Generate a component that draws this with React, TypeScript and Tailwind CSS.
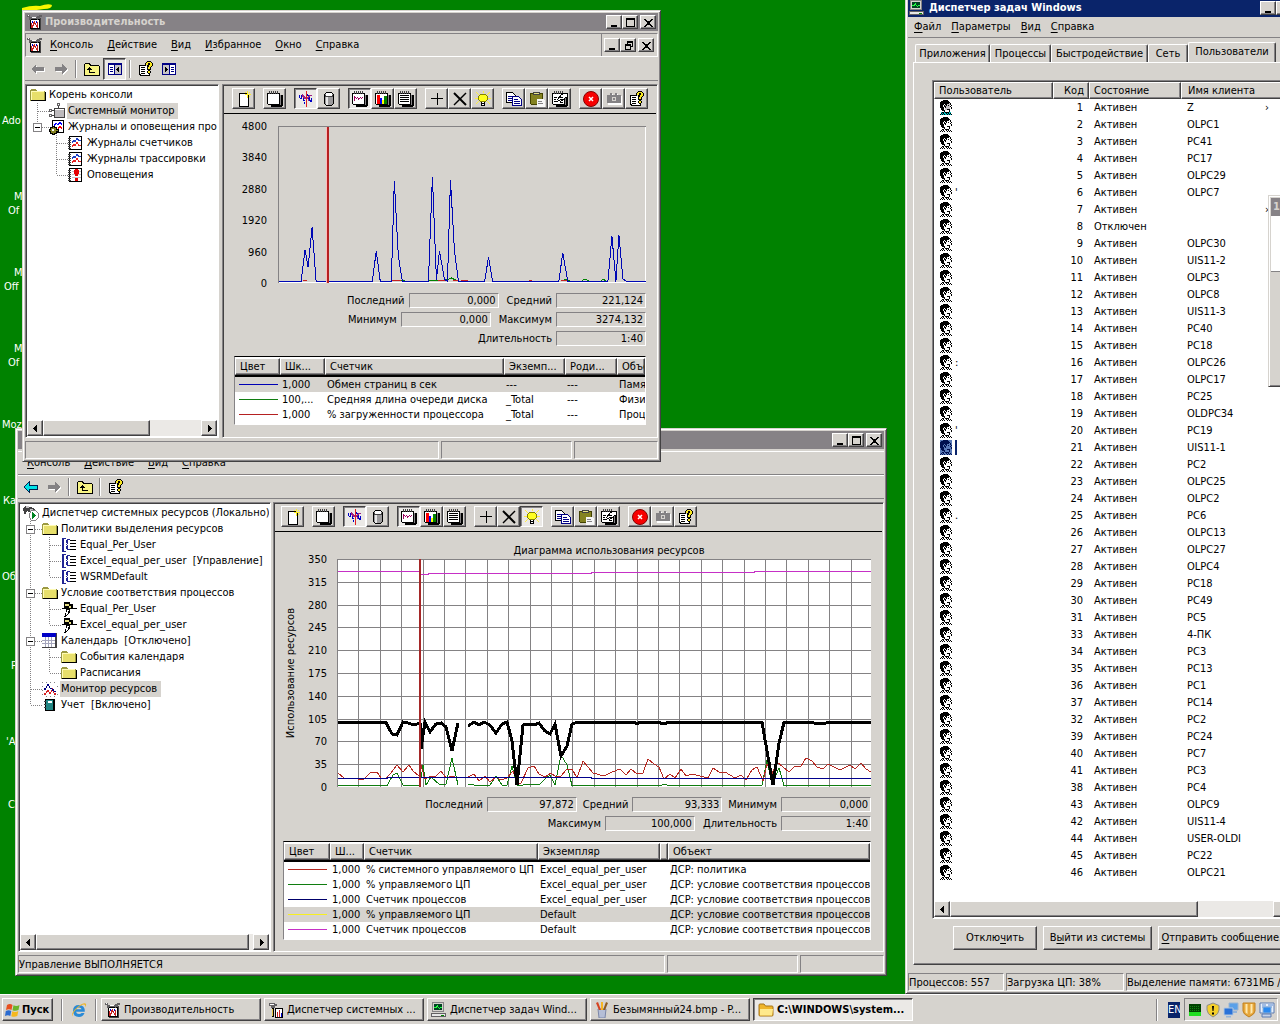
import React, { useId } from "react";

/* ---------- shared surfaces ---------- */

const RAISED =
  "bg-[#d6d3ce] border border-t-white border-l-white border-r-[#424142] border-b-[#424142] shadow-[inset_-1px_-1px_0_#848284]";
const PRESSED =
  "bg-[#ebe9e6] border border-t-[#424142] border-l-[#424142] border-r-white border-b-white shadow-[inset_1px_1px_0_#848284]";
const SUNKEN = "border border-t-[#848284] border-l-[#848284] border-r-white border-b-white";
const PANE =
  "border border-t-[#848284] border-l-[#848284] border-r-white border-b-white shadow-[inset_1px_1px_0_#424142] p-px";

/* ---------- icons ---------- */

type IconProps = { children: React.ReactNode };
const Icon = ({ children }: IconProps) => (
  <svg className="block h-4 w-4 shrink-0" viewBox="0 0 16 16" shapeRendering="crispEdges" aria-hidden="true">
    {children}
  </svg>
);

const pixelPath = (rows: string[], mark = "#") =>
  rows
    .map((row, y) => [...row].map((c, x) => (c === mark ? `M${x} ${y}h1v1h-1z` : "")).join(""))
    .join("");

const FACE = pixelPath([
  "...#####....",
  ".########...",
  "##########..",
  "#########.#.",
  "####.##...#.",
  "###.#.#.#..#",
  "###.##....#.",
  "####.#.....#",
  ".###.......#",
  ".###...###..",
  "..###....#..",
  "....#....#..",
  "..##.####...",
  ".#.#..#.#.#.",
  "#.#.#..#.#.#",
]);

const HELP_ROWS = [
  ".........####...",
  "........#yyyy#..",
  ".......#yy##yy#.",
  ".......#yy##yy#.",
  ".#######.##yyy#.",
  ".#wwwwwww##yy#..",
  ".#w####ww#yy#...",
  ".#wwwwwww#yy#...",
  ".#w####ww####...",
  ".#wwwwwwww##....",
  ".#w####ww#yy#...",
  ".#wwwwwww#yy#...",
  ".#w####www##....",
  ".##wwwwwwww#....",
  "..##########....",
];
const HELP_BLACK = pixelPath(HELP_ROWS, "#");
const HELP_WHITE = pixelPath(HELP_ROWS, "w");
const HELP_YELLOW = pixelPath(HELP_ROWS, "y");

const UserIcon = ({ tone }: { tone: "plain" | "own" | "selected" }) => (
  <svg className="block h-[15px] w-3" viewBox="0 0 12 15" shapeRendering="crispEdges" aria-hidden="true">
    {tone === "selected" && <path d="M0 0h12v15H0z" fill="#5a7ab8" />}
    {tone === "own" && <path d="M5 3h5v7H5z" fill="#c6c3c6" />}
    {tone === "own" && <path d="M1 12h10v3H1z" fill="#00c3c6" />}
    <path d={FACE} fill={tone === "selected" ? "#001050" : "#000"} />
  </svg>
);

const BackIcon = ({ on }: { on?: boolean }) => (
  <Icon>
    {!on && <path d="M2 9l5-5v3h8v4H7v3z" fill="#fff" />}
    <path d="M1 8l5-5v3h8v4H6v3z" fill={on ? "#00e3e7" : "#848284"} stroke={on ? "#002050" : "none"} />
  </Icon>
);
const ForwardIcon = () => (
  <Icon>
    <path d="M15 9l-5-5v3H3v4h7v3z" fill="#fff" />
    <path d="M14 8L9 3v3H2v4h7v3z" fill="#848284" />
  </Icon>
);
const UpIcon = () => (
  <Icon>
    <path d="M.5 14.500v-11l1-1h4l1 2h8l1 1v9z" fill="#f7f384" stroke="#000" />
    <path d="M5 6h1v1h1v1h1v1H6v2h5v1H5V9H3V8h1V7h1z" fill="#000" />
  </Icon>
);
const PanelIcon = ({ flip }: { flip?: boolean }) => (
  <Icon>
    <path d="M1 2h14v12H1z" fill="#000084" />
    <path d="M2 4h12v9H2z" fill="#fff" />
    <path d={flip ? "M2 4h6v9H2z" : "M8 4h6v9H8z"} fill="#c6c3c6" />
    <path d={flip ? "M8 4h1v9H8z" : "M7 4h1v9H7z"} fill="#000084" />
    <path d={flip ? "M10 6h3v1h-3zM10 8h3v1h-3zM10 10h3v1h-3z" : "M3 6h3v1H3zM3 8h3v1H3zM3 10h3v1H3z"} fill="#000084" />
    <path d={flip ? "M4 6l3 2.500L4 11z" : "M12 6L9 8.500l3 2.500z"} fill="#000" />
  </Icon>
);
const HelpIcon = () => (
  <Icon>
    <path d={HELP_WHITE} fill="#fff" />
    <path d={HELP_YELLOW} fill="#f7e721" />
    <path d={HELP_BLACK} fill="#000" />
  </Icon>
);
const NewIcon = () => (
  <Icon>
    <path d="M3.500 2.500h7l2 2v11h-9z" fill="#fff" stroke="#000" />
    <path d="M9 3h6v1H9zM11 0h1v7h-1zM9 1h1v1H9zM13 1h1v1h-1zM13 5h1v1h-1z" fill="#ffef21" />
  </Icon>
);
const Pad = ({ children }: { children?: React.ReactNode }) => (
  <Icon>
    <path d="M3 4h13v10l-2 2H4z" fill="#000" />
    <path d="M4 4h10v10H4z" fill="#848284" />
    <path d="M.5 2.500h12v11h-11l-1-1z" fill="#fff" stroke="#000" />
    <path d="M2 0h1v3H2zM4 0h1v3H4zM6 0h1v3H6zM8 0h1v3H8zM10 0h1v3h-1z" fill="#424142" />
    {children}
  </Icon>
);
const ActivityIcon = () => (
  <Icon>
    <path d="M1 4h1v3h1V4h1v5h1V6h1v3h1v1H5V9H4V8H2V7H1zM10 4h1v2h1v3h1V7h1v4h-2v-1h-1V8h-1zM9 3h1v2H9zM6 11h1v2H6z" fill="#0000c6" />
    <path d="M4 3h1v1h1v1h1v1h3V5h1V4h3v1h-2v1h-1v1h-1v1h1v2h-1V8H6V7H5V6H4z" fill="#a02080" />
    <path d="M8 0h1v16H8z" fill="#e02020" />
  </Icon>
);
const DiskIcon = () => (
  <Icon>
    <path d="M3.500 3.500l2-2h5l2 2v9l-2 2h-5l-2-2z" fill="#9c9a9c" stroke="#000" />
    <path d="M5 6h2v8H5z" fill="#e7e7e7" />
    <path d="M5 2h6v3H5z" fill="#fff" />
    <path d="M4 4h1v1h6V4h1v2H4z" fill="#424142" />
  </Icon>
);
const GraphIcon = () => (
  <Pad>
    <path d="M2 5h1v5H2zM3 6h1v1H3zM4 7h1v1H4zM5 6h1v1H5zM6 7h1v2H6zM7 7h1v1H7zM8 6h1v1H8zM9 7h1v1H9zM10 6h1v1h-1z" fill="#a00060" />
  </Pad>
);
const BarsIcon = () => (
  <Pad>
    <path d="M2 4h3v9H2z" fill="#ff0000" />
    <path d="M5 7h2v6H5z" fill="#0000ff" />
    <path d="M7 9h2v4H7z" fill="#ffff00" />
    <path d="M9 5h3v8H9z" fill="#008200" />
  </Pad>
);
const ReportIcon = () => (
  <Pad>
    <path d="M2 4h9v1H2zM2 6h9v1H2zM2 8h9v1H2zM2 10h9v1H2z" fill="#000" />
  </Pad>
);
const PlusIcon = () => (
  <Icon>
    <path d="M8 2h1v5h5v1H9v6H8V8H2V7h6z" fill="#000" />
  </Icon>
);
const DeleteIcon = () => (
  <svg className="block h-4 w-4 shrink-0" viewBox="0 0 16 16" aria-hidden="true">
    <path d="M2 2l12 12" stroke="#000" strokeWidth="2" />
    <path d="M14 2L2 14" stroke="#000" strokeWidth="1.500" />
  </svg>
);
const BulbIcon = () => (
  <Icon>
    <path d="M1 1l3 3M15 1l-3 3M0 7h3M13 7h3M8 0v2M1 13l3-3M15 13l-3-3" stroke="#ffef42" />
    <path d="M5.500 3.500h5l2 2v3l-2 2h-5l-2-2v-3z" fill="#ffff21" stroke="#848200" />
    <path d="M6 11h4v4H6z" fill="#000" />
    <path d="M7 11h2v1H7zM7 13h2v1H7z" fill="#fff" />
  </Icon>
);
const CopyIcon = () => (
  <Icon>
    <path d="M.5 1.500h6l3 3v7h-9z" fill="#fff" stroke="#000" />
    <path d="M2 5h4v1H2zM2 7h4v1H2zM2 9h4v1H2z" fill="#000084" />
    <path d="M6.500 5.500h6l3 3v6h-9z" fill="#fff" stroke="#000084" />
    <path d="M8 8h4v1H8zM8 10h6v1H8zM8 12h6v1H8z" fill="#000084" />
  </Icon>
);
const PasteIcon = () => (
  <Icon>
    <path d="M1 2h13v12H2l-1-1z" fill="#424100" />
    <path d="M2 3h11v10H2z" fill="#848221" />
    <path d="M4 1h7v3H4z" fill="#424142" />
    <path d="M5 2h5v1H5z" fill="#e7e384" />
    <path d="M8 8h6l2 2v6H8z" fill="#f7f7f7" />
    <path d="M9 10h4v1H9zM9 12h5v1H9z" fill="#848284" />
  </Icon>
);
const PropsIcon = () => (
  <Pad>
    <path d="M2 6h3v1H2zM2 8h2v1H2zM2 10h4v1H2zM8 11h3v1H8z" fill="#000" />
    <path d="M5.500 8.500l4-5 2-1h4v3l-3 2-4 3z" fill="#fff" stroke="#000" />
    <path d="M8 6h3v1H8zM8 8h4v1H8z" fill="#000" />
  </Pad>
);
const StopIcon = () => (
  <svg className="block h-4 w-4 shrink-0" viewBox="0 0 16 16" aria-hidden="true">
    <circle cx="8" cy="8" r="7.500" fill="#f70000" stroke="#840000" />
    <path d="M6 6l4 4M10 6l-4 4" stroke="#fff" strokeWidth="1.500" />
  </svg>
);
const CameraIcon = () => (
  <Icon>
    <path d="M2 5h3V3h2v2h3V3h2v2h4v9H2z" fill="#fff" />
    <path d="M1 4h3V2h2v2h3V2h2v2h4v8H1z" fill="#848284" />
    <path d="M6 6h4v4H6z" fill="#d6d3ce" />
    <path d="M7 7h2v2H7z" fill="#848284" />
  </Icon>
);
const FolderIcon = () => (
  <Icon>
    <path d="M0 3l1-1h5l1 2h7l1 1v9H0z" fill="#9c9a42" />
    <path d="M1 4h13v9H1z" fill="#e7df6b" />
    <path d="M1 4h13v1H1zM1 4h1v9H1z" fill="#fffbb5" />
    <path d="M1 13h14V5h1v9H1z" fill="#000" />
  </Icon>
);
const MonitorNodeIcon = () => (
  <Icon>
    <path d="M5.500 5.500h10v9h-10z" fill="#bdbabd" stroke="#424142" />
    <path d="M6 6h9v1H6z" fill="#fff" />
    <path d="M9 3h1v2H9zM3 7h2v1H3zM3 12h2v1H3z" fill="#424142" />
    <path d="M8 0h3v3H8zM0 6h3v3H0zM0 11h3v3H0z" fill="#636163" />
    <path d="M9 1h1v1H9zM1 7h1v1H1zM1 12h1v1H1z" fill="#fff" />
  </Icon>
);
const LogsIcon = () => (
  <Icon>
    <path d="M3.500 1.500h11v12h-11z" fill="#fff" stroke="#000" />
    <path d="M5 7l2-3 2 2 2-3 2 3" fill="none" stroke="#0000ff" />
    <path d="M9 10l2-3 2 3" fill="none" stroke="#ff0000" />
    <path d="M1 8h2V7h2v1h2v2h2v2H7v2H5v1H3v-1H1v-2H0v-2h1z" fill="#848221" stroke="#000" />
    <path d="M3 10h2v2H3z" fill="#fff" />
  </Icon>
);
const LogPageIcon = ({ alert }: { alert?: boolean }) => (
  <Icon>
    <path d="M1.500 1.500h12v13h-12z" fill="#fff" stroke="#000" />
    <path d="M0 3h3v1H0zM0 5h3v1H0zM0 7h3v1H0zM0 9h3v1H0zM0 11h3v1H0zM0 13h3v1H0z" fill="#424142" />
    {alert ? (
      <>
        <path d="M4 4h9v1H4zM4 7h9v1H4zM4 10h9v1H4z" fill="#c6c3c6" />
        <path d="M7 2h3v1h1v4h-1v2H7V7H6V3h1zM7 11h3v3H7z" fill="#e70000" />
      </>
    ) : (
      <>
        <path d="M4 8l2-3 1 2 2-4 2 3 2-1" fill="none" stroke="#2142c6" />
        <path d="M4 12l2-3 1 2 2-4 2 4 2-1" fill="none" stroke="#e72121" />
      </>
    )}
  </Icon>
);
const AppIcon = () => (
  <Icon>
    <path d="M3.500 5.500h9v9h-9z" fill="#fff" stroke="#000" />
    <path d="M4 14V9h1v2h1V8h1V7h1v2h1v2h1V8h1v6h-1v-1H9v-2H8v-1H7v2H6v2z" fill="#c62121" />
    <path d="M5 7h1v2H5zM9 7h1v2H9z" fill="#0000c6" />
    <path d="M0 1h3v2H0zM2 3h8V2h2V1h3v2h-2v2h-2v1h-1V5H4v1H2z" fill="#636163" />
    <path d="M1 1h1v1H1zM5 3h4v1H5z" fill="#fff" />
    <path d="M13 4h1v12H4v-1h9z" fill="#424142" />
  </Icon>
);
const ResourceRootIcon = () => (
  <Icon>
    <path d="M0 3l3-2 5 1 4 2v3l-4 1-4-2-1 3H1z" fill="#424142" />
    <path d="M3 1h3v2H3zM7 4h3v2H7z" fill="#c6c3c6" />
    <path d="M8.500 5.500h4l3 3v4l-3 3h-4l-2-3v-4z" fill="#fff" stroke="#848284" />
    <path d="M9 7h1v1h1v1h1v1h1v1h-1v1h-1v1h-1v1H9z" fill="#008221" />
  </Icon>
);
const PolicyIcon = () => (
  <Icon>
    <path d="M5 1H1v14h4v-1H3V2h2zM6 2h3v1H7v4H6V6H5V3h1zM5 7h1v1H5zM6 8h1v4h2v1H6v-1H5V9h1z" fill="#212494" />
    <path d="M9 3h6v1H9zM9 6h6v1H9zM9 9h6v1H9zM9 12h6v1H9z" fill="#000" />
  </Icon>
);
const MatchIcon = () => (
  <Icon>
    <path d="M3 1h6v2h3v4h4v1H9v3L5 16H3l2-5V8H1V7h2z" fill="#000" />
    <path d="M4 3h4v2H4zM8 5h2v2H8z" fill="#e7df84" />
    <path d="M6 9h2l-2 5H5z" fill="#fff" />
    <path d="M11 3h1v5h-1z" fill="#000" />
  </Icon>
);
const CalendarIcon = () => (
  <Icon>
    <path d="M0 0h15v15H0z" fill="#424142" />
    <path d="M0 0h14v4H0z" fill="#0000c6" />
    <path d="M0 4h13v10H0z" fill="#fff" />
    <path d="M3 4h1v10H3zM6 4h1v10H6zM9 4h1v10H9zM0 7h13v1H0zM0 10h13v1H0z" fill="#a5a6bd" />
  </Icon>
);
const ResMonIcon = () => (
  <Icon>
    <path d="M0 1h15v14H0z" fill="#fff" />
    <path d="M0 1h1v1H0zM4 1h1v1H4zM8 1h1v1H8zM12 1h1v1h-1zM0 5h1v1H0zM0 9h1v1H0zM0 13h1v1H0zM15 5h1v1h-1zM15 13h1v1h-1zM4 15h1v1H4zM8 15h1v1H8zM12 15h1v1h-1z" fill="#848284" />
    <path d="M2 7h2v2H2zM4 5h1v2H4zM5 3h2v2H5zM7 5h1v2H7zM8 7h2v1H8zM10 8h2v2h-2zM12 10h2v1h-2z" fill="#000084" />
    <path d="M2 12h2v2H2zM4 10h1v2H4zM5 9h2v2H5zM7 11h2v2H7zM9 9h1v2H9zM10 7h1v1h-1zM11 10h1v2h-1zM12 12h2v2h-2z" fill="#d62121" />
  </Icon>
);
const BookIcon = () => (
  <Icon>
    <path d="M3 2h10v12H3z" fill="#000" />
    <path d="M4 3h7v10H4z" fill="#218684" />
    <path d="M6 4h4v2H6z" fill="#fff" />
    <path d="M2 4h2v1H2zM2 7h2v1H2zM2 10h2v1H2z" fill="#424142" />
  </Icon>
);
const TaskMgrIcon = () => (
  <Icon>
    <path d="M1.500.5h11v9h-11z" fill="#d6d3ce" stroke="#848284" />
    <path d="M3 2h8v6H3z" fill="#004221" />
    <path d="M3 5h2V4h1V3h1v2h1v1h1V5h2v1H9v1H8V6H7V5H6v1H3z" fill="#21ff42" />
    <path d="M.5 11.500h14v3H.5z" fill="#e7e7e7" stroke="#636163" />
    <path d="M10 13h3v1h-3z" fill="#008200" />
  </Icon>
);
const WsrmIcon = () => (
  <Icon>
    <path d="M1 1h6v1h2v2H7v2H3V4H1z" fill="#636163" />
    <path d="M2 2h4v1H2z" fill="#fff" />
    <path d="M4 6h2v9H4z" fill="#000" />
    <path d="M4 7h1v7H4z" fill="#e7c642" />
    <path d="M7.500 6.500h7v9h-7z" fill="#fff" stroke="#000" />
    <path d="M9 10h1v5H9zM11 8h1v7h-1z" fill="#c62121" />
    <path d="M13 11h1v4h-1z" fill="#0000c6" />
  </Icon>
);
const PaintIcon = () => (
  <svg className="block h-4 w-4 shrink-0" viewBox="0 0 16 16" aria-hidden="true">
    <path d="M4 7h8l-1 9H5z" fill="#b5bed6" stroke="#7b86a8" />
    <path d="M2 1l2-1 3 8H5z" fill="#d64221" />
    <path d="M7 0h2v8H7z" fill="#f7b521" />
    <path d="M12 0l2 1-3 7H9z" fill="#8c5a21" />
  </svg>
);
const XpFolderIcon = () => (
  <svg className="block h-4 w-4 shrink-0" viewBox="0 0 16 16" aria-hidden="true">
    <path d="M1 3q0-1 1-1h4l1.500 2H14q1 0 1 1v8q0 1-1 1H2q-1 0-1-1z" fill="#efb52a" stroke="#a5751a" />
    <path d="M2 7h13l-1 6.500H2z" fill="#ffe98c" />
  </svg>
);
const StartFlag = () => (
  <svg className="block h-4 w-4 shrink-0" viewBox="0 0 16 16" aria-hidden="true">
    <path d="M2 3q3-2 5.500 0L6.500 8Q4 6.500 1 8z" fill="#e8501e" />
    <path d="M8.500 3.200q3 1.500 6-.2l-1 5q-3 1.500-6 .2z" fill="#6bb52a" />
    <path d="M.8 9q3-1.600 5.500 0l-1 5Q3 12.500 0 14z" fill="#2a6bd0" />
    <path d="M7.300 9.200q3 1.500 6-.2l-1 5q-3 1.500-6 .2z" fill="#f5b81e" />
  </svg>
);
const IeIcon = () => (
  <svg className="block h-4 w-4 shrink-0" viewBox="0 0 16 16" aria-hidden="true">
    <path d="M13.800 9.700H5Q5.500 12 8 12q1.800 0 2.500-1H13.500Q12 15 8 15q-6 0-6-6.200Q2 3 8 3q6 0 5.800 6.700zM5 7.300h5.600Q10.200 5.500 8 5.500T5 7.300z" fill="#2a8ad6" />
    <path d="M1.500 14.500Q-.5 11 6 5.500 12 .5 14.500 1.500q1.500 1-.5 4 .8-2.800-1-3Q10.500 2.500 6 6.500q-5 5-4.500 8z" fill="#efb52a" />
  </svg>
);
const CpuTray = () => (
  <Icon>
    <path d="M2 2h12v12H2z" fill="#004200" />
    <path d="M2 10h12v4H2z" fill="#21df21" />
    <path d="M3 4h10M3 6h10M3 8h10" stroke="#108210" strokeDasharray="1 1" />
  </Icon>
);
const ShieldTray = ({ warn }: { warn?: boolean }) => (
  <svg className="block h-4 w-4 shrink-0" viewBox="0 0 16 16" aria-hidden="true">
    {warn ? (
      <>
        <path d="M8 1l6 2.500V8q0 4-6 7-6-3-6-7V3.500z" fill="#f5cf2a" stroke="#8c8c8c" />
        <path d="M7 4h2l-.5 5h-1zM7 10.500h2v2H7z" fill="#000" />
      </>
    ) : (
      <>
        <path d="M2 1h12v8q0 3-6 6-6-3-6-6z" fill="#e8a83a" stroke="#c08020" />
        <path d="M4.500 2h2v10l-2-1.500zM9.500 2h2v8.500l-2 1.500z" fill="#ffe9b0" />
      </>
    )}
  </svg>
);
const NetTray = () => (
  <svg className="block h-4 w-4 shrink-0" viewBox="0 0 16 16" aria-hidden="true">
    <path d="M6 1h9v7H6z" fill="#5aa0e8" stroke="#9cb4d0" />
    <path d="M1 6h9v7H1z" fill="#2a72d8" stroke="#b4c8e0" />
    <path d="M3 14h5v1.500H3zM10 9h4v2h-4z" fill="#94b4d8" />
  </svg>
);
const ServerTray = () => (
  <svg className="block h-4 w-4 shrink-0" viewBox="0 0 16 16" aria-hidden="true">
    <path d="M1 1h14v10H1z" fill="#e7effa" stroke="#5a7ab0" />
    <path d="M3 3h4M9 3h5M3 5h10" stroke="#5a8ad0" />
    <path d="M4 5h8v6H4z" fill="#2a8af0" stroke="#8cb0d8" />
    <path d="M3 12h9v3H3z" fill="#c6d3e8" stroke="#5a7ab0" />
  </svg>
);

/* ---------- window chrome ---------- */

type Glyph = "min" | "max" | "restore" | "close" | "left" | "right";
const GLYPHS: Record<Glyph, string> = {
  min: "M2 8h6v2H2z",
  max: "M1 1h9v9H1zM2 3v6h7V3z",
  restore: "M4 1h6v6H8v3H2V4h2zM5 3v1h3v2h1V3zM3 6v3h4V6z",
  close: "M1 2h2v1h1v1h3V3h1V2h2v1H9v1H8v1H7v2h1v1h1v1h1v1H8V9H7V8H4v1H3v1H1V9h1V8h1V7h1V5H3V4H2V3H1z",
  left: "M7 2v7H6V8H5V7H4V6H3V5h1V4h1V3h1V2z",
  right: "M4 2v7h1V8h1V7h1V6h1V5H7V4H6V3H5V2z",
};
const GlyphSvg = ({ name }: { name: Glyph }) => (
  <svg className="block h-[11px] w-[11px]" viewBox="0 0 11 11" shapeRendering="crispEdges" aria-hidden="true">
    <path d={GLYPHS[name]} fill="#000" fillRule="evenodd" />
  </svg>
);
const CaptionButton = ({ name, label }: { name: Glyph; label: string }) => (
  <button aria-label={label} className={`flex h-[14px] w-4 shrink-0 items-center justify-center ${RAISED}`}>
    <GlyphSvg name={name} />
  </button>
);
const CaptionButtons = ({ restore }: { restore?: boolean }) => (
  <div className="flex shrink-0">
    <CaptionButton name="min" label="Свернуть" />
    <CaptionButton name={restore ? "restore" : "max"} label={restore ? "Восстановить" : "Развернуть"} />
    <div className="ml-0.5">
      <CaptionButton name="close" label="Закрыть" />
    </div>
  </div>
);

const Window = ({ place, children }: { place: string; children: React.ReactNode }) => (
  <section
    className={`absolute flex flex-col border border-t-[#d6d3ce] border-l-[#d6d3ce] border-r-[#424142] border-b-[#424142] bg-[#d6d3ce] p-0.5 shadow-[inset_1px_1px_0_#fff,inset_-1px_-1px_0_#848284] ${place}`}
  >
    {children}
  </section>
);

const MenuItem = ({ text }: { text: string }) => (
  <button className="px-[7px] leading-4">
    <span className="underline underline-offset-2">{text[0]}</span>
    {text.slice(1)}
  </button>
);

const ToolButton = ({ label, on, children }: { label: string; on?: boolean; children: React.ReactNode }) => (
  <button aria-label={label} className={`flex h-[22px] w-[23px] items-center justify-center ${on ? PRESSED : ""}`}>
    {children}
  </button>
);
const ToolSeparator = () => <div className="mx-[3px] h-[18px] w-0.5 border-l border-l-[#848284] border-r border-r-white" />;

const ScrollBar = ({ thumb }: { thumb: string }) => (
  <div className="flex h-4 shrink-0 bg-[#ebe9e6]">
    <button aria-label="Влево" className={`flex w-4 shrink-0 items-center justify-center ${RAISED}`}>
      <GlyphSvg name="left" />
    </button>
    <div className={`${RAISED} ${thumb}`} />
    <button aria-label="Вправо" className={`ml-auto flex w-4 shrink-0 items-center justify-center ${RAISED}`}>
      <GlyphSvg name="right" />
    </button>
  </div>
);

/* ---------- tree ---------- */

type Guide = "none" | "line" | "tee" | "end" | "open" | "openEnd";
type Node = { guides: Guide[]; icon: React.ReactNode; text: string; selected?: boolean };

const GuideCell = ({ kind }: { kind: Guide }) => {
  const ends = kind === "end" || kind === "openEnd";
  return (
    <svg className="block h-4 w-[19px] shrink-0" viewBox="0 0 19 16" shapeRendering="crispEdges" aria-hidden="true">
      {kind !== "none" && <path d={ends ? "M7.500 0v8" : "M7.500 0v16"} stroke="#848284" strokeDasharray="1 1" />}
      {kind !== "none" && kind !== "line" && <path d="M8 8.500h11" stroke="#848284" strokeDasharray="1 1" />}
      {(kind === "open" || kind === "openEnd") && (
        <>
          <path d="M3.500 4.500h8v8h-8z" fill="#fff" stroke="#848284" />
          <path d="M5 8h5v1H5z" fill="#000" />
        </>
      )}
    </svg>
  );
};

const Tree = ({ nodes }: { nodes: Node[] }) => (
  <ul className="min-h-0 flex-1 overflow-hidden pt-px pl-[3px]">
    {nodes.map((n, i) => (
      <li key={i} className="flex h-4 items-center whitespace-nowrap">
        {n.guides.map((g, j) => (
          <GuideCell key={j} kind={g} />
        ))}
        {n.icon}
        <span className={`ml-0.5 px-px leading-4 whitespace-pre ${n.selected ? "bg-[#d6d3ce] pr-1" : ""}`}>{n.text}</span>
      </li>
    ))}
  </ul>
);

const PERF_TREE: Node[] = [
  { guides: [], icon: <FolderIcon />, text: "Корень консоли" },
  { guides: ["tee"], icon: <MonitorNodeIcon />, text: "Системный монитор", selected: true },
  { guides: ["openEnd"], icon: <LogsIcon />, text: "Журналы и оповещения прои" },
  { guides: ["none", "tee"], icon: <LogPageIcon />, text: "Журналы счетчиков" },
  { guides: ["none", "tee"], icon: <LogPageIcon />, text: "Журналы трассировки" },
  { guides: ["none", "end"], icon: <LogPageIcon alert />, text: "Оповещения" },
];

const WSRM_TREE: Node[] = [
  { guides: [], icon: <ResourceRootIcon />, text: "Диспетчер системных ресурсов (Локально)" },
  { guides: ["open"], icon: <FolderIcon />, text: "Политики выделения ресурсов" },
  { guides: ["line", "tee"], icon: <PolicyIcon />, text: "Equal_Per_User" },
  { guides: ["line", "tee"], icon: <PolicyIcon />, text: "Excel_equal_per_user  [Управление]" },
  { guides: ["line", "end"], icon: <PolicyIcon />, text: "WSRMDefault" },
  { guides: ["open"], icon: <FolderIcon />, text: "Условие соответствия процессов" },
  { guides: ["line", "tee"], icon: <MatchIcon />, text: "Equal_Per_User" },
  { guides: ["line", "end"], icon: <MatchIcon />, text: "Excel_equal_per_user" },
  { guides: ["open"], icon: <CalendarIcon />, text: "Календарь  [Отключено]" },
  { guides: ["line", "tee"], icon: <FolderIcon />, text: "События календаря" },
  { guides: ["line", "end"], icon: <FolderIcon />, text: "Расписания" },
  { guides: ["tee"], icon: <ResMonIcon />, text: "Монитор ресурсов", selected: true },
  { guides: ["end"], icon: <BookIcon />, text: "Учет  [Включено]" },
];

/* ---------- monitor pane ---------- */

const ChartButton = ({ label, on, children }: { label: string; on?: boolean; children: React.ReactNode }) => (
  <button aria-label={label} className={`flex h-[21px] w-[23px] items-center justify-center ${on ? PRESSED : RAISED}`}>
    {children}
  </button>
);

const ChartToolbar = ({ highlight }: { highlight?: boolean }) => (
  <div className={`flex h-7 shrink-0 gap-2 border-b border-b-black pt-0.5 ${highlight ? "pl-1.5" : "pl-2"}`}>
    <ChartButton label="Новый набор"><NewIcon /></ChartButton>
    <ChartButton label="Очистить"><Pad /></ChartButton>
    <div className="flex">
      <ChartButton label="Текущая активность" on><ActivityIcon /></ChartButton>
      <ChartButton label="Данные журнала"><DiskIcon /></ChartButton>
    </div>
    <div className="flex">
      <ChartButton label="График" on><GraphIcon /></ChartButton>
      <ChartButton label="Гистограмма"><BarsIcon /></ChartButton>
      <ChartButton label="Отчет"><ReportIcon /></ChartButton>
    </div>
    <div className="flex">
      <ChartButton label="Добавить"><PlusIcon /></ChartButton>
      <ChartButton label="Удалить"><DeleteIcon /></ChartButton>
      <ChartButton label="Выделить" on={highlight}><BulbIcon /></ChartButton>
    </div>
    <div className="flex">
      <ChartButton label="Копировать"><CopyIcon /></ChartButton>
      <ChartButton label="Вставить"><PasteIcon /></ChartButton>
      <ChartButton label="Свойства"><PropsIcon /></ChartButton>
    </div>
    <div className="flex">
      <ChartButton label="Остановить"><StopIcon /></ChartButton>
      <ChartButton label="Обновить"><CameraIcon /></ChartButton>
      <ChartButton label="Справка"><HelpIcon /></ChartButton>
    </div>
  </div>
);

const Readout = ({ label, value }: { label: string; value: string }) => {
  const id = useId();
  return (
    <div className="flex items-center gap-1">
      <label htmlFor={id}>{label}</label>
      <output id={id} className={`h-[15px] w-[90px] pr-0.5 text-right leading-[14px] ${SUNKEN}`}>
        {value}
      </output>
    </div>
  );
};

type Counter = { color: string; cells: string[]; selected?: boolean };
type Column = { title: string; width: string };

const CounterTable = ({ columns, rows }: { columns: Column[]; rows: Counter[] }) => (
  <div className="flex-none overflow-hidden border border-t-black border-l-[#848284] border-r-white border-b-white bg-white pb-0.5">
    <table className="w-full table-fixed border-collapse">
      <thead>
        <tr className="h-[19px] border-b-2 border-b-black">
          {columns.map((c, i) => (
            <th key={i} className={`${c.width} p-0 font-normal`}>
              <div className={`h-[17px] overflow-hidden pl-1 text-left leading-4 whitespace-nowrap ${RAISED}`}>{c.title}</div>
            </th>
          ))}
        </tr>
      </thead>
      <tbody>
        {rows.map((r, i) => (
          <tr key={i} className={`h-[15px] ${r.selected ? "bg-[#d6d3ce]" : ""}`}>
            <td className="p-0 pl-1">
              <div className="h-px w-[39px]" style={{ backgroundColor: r.color }} />
            </td>
            {r.cells.map((t, j) => (
              <td key={j} className="overflow-hidden p-0 pl-0.5 leading-[15px] whitespace-nowrap">
                {t}
              </td>
            ))}
          </tr>
        ))}
      </tbody>
    </table>
  </div>
);

const AxisLabels = ({ values, width }: { values: number[]; width: string }) => (
  <div className={`-mt-[5px] -mb-[7px] flex flex-col justify-between text-right leading-3 ${width}`}>
    {values.map((v) => (
      <span key={v}>{v}</span>
    ))}
  </div>
);

const PerfChart = () => (
  <svg className="block h-[157px] min-w-0 flex-1" viewBox="0 0 367 157" preserveAspectRatio="none" role="img" aria-label="График счетчиков">
    <g shapeRendering="crispEdges" fill="none">
      <path d="M366.500 0v156.500H0" stroke="#fff" />
      <path d="M.5 157V.5H367" stroke="#848284" />
      <path d="M116 155l3-1h6l2 1M150 155l4-1h14l5-2 6 3M284 155l3-2 4 2M303 155l3-2 4 2M322 155l2-2 3 2" stroke="#008200" />
      <path d="M25 154.500h4M114 154.500h9M160 154.500h10M175 154.500h5M183 154.500h6M282 154.500h6M250 154.500h3" stroke="#c62121" />
      <path
        d="M1 155.500H23L27 124L30 141L34 101L38 155.500H94L98 125L102 155.500H113L116 55L120 130L124 155.500H150L154 51L158 154L161 125L166 153L169 155.500L172 54L176 125L180 155.500H206L210 131L214 155.500H280L284 127L289 155.500H329L333 110L337 155.500L340 109L344 153L348 155.500H367"
        stroke="#0008b5"
      />
      <path d="M48.500 1v156" stroke="#ffbaba" />
      <path d="M50 1v156" stroke="#b52021" strokeWidth="2" />
    </g>
  </svg>
);

const UsageChart = () => (
  <svg className="block h-[228px] min-w-0 flex-1 bg-white" viewBox="0 0 534 228" preserveAspectRatio="none" role="img" aria-label="Диаграмма использования ресурсов">
    <g shapeRendering="crispEdges" fill="none">
      <g stroke="#848284">
        {Array.from({ length: 25 }, (_, i) => Math.round(i * 21.4) + 0.5).map((x) => (
          <path key={x} d={`M${x} 0V228`} />
        ))}
        {Array.from({ length: 10 }, (_, i) => Math.round(i * 22.8) + 0.5).map((y) => (
          <path key={y} d={`M0 ${y}H534`} />
        ))}
      </g>
      <path d="M1 12.500H83V15.500H91V14.500H254V13.500H417V12.500H534" stroke="#c630c6" />
      <path
        d="M1 226.500H50L56 216L60 214L66 226H83L86 206L89 226L94 218L103 226L109 225L115 199L121 226M131 225L137 226H153L159 217L165 226H170L175 207L180 226H186L191 225H197L202 226L208 220L213 216L218 226L224 196L230 206L235 226.500H324L327 225L331 226.500H425L430 201L435 226L442 209L447 226.500H534"
        stroke="#107d10"
      />
      <path
        d="M1 214L7 219H20L22 221L27 220L34 213H40L44 219H49L54 214L60 206L66 213L72 206L76 212L82 217L84 206L88 220L94 217H99L104 212L109 219L115 217L121 219M131 218L137 215L142 222L148 217L153 223L159 218L164 221L170 219L176 212L181 225L184 224L191 209L197 207L202 215L208 218L214 214L219 218L224 217L229 211L235 210L240 219L246 202L256 214L267 217L275 213L283 210L289 216L294 210L300 215L306 214L311 200L317 205L322 208L327 220L333 215L338 219L344 210L349 217L355 215L371 219L376 209L382 213H388L398 219L404 216L409 221L415 211L420 208L426 222L430 205L435 215L440 203L452 213L458 207H464L469 199L475 202L480 208L486 210L491 205L497 208L503 211L513 206L518 210L524 204L529 210L534 213"
        stroke="#b52821"
      />
      <path d="M1 219.500H50V218.500H254V219.500H534" stroke="#00008c" />
      <path
        d="M1 163.500H49L55 175L60 176L66 163L71 164L77 166L83 164L84 190L88 163L93 173L99 165L104 164L109 168L115 192L121 164M131 167L137 163L142 166L147 163L153 166L159 174L165 165L170 163L175 182L180 226L186 166L191 165L197 166L202 164L208 172L213 175L218 165L224 197L230 187L235 165L240 163.500H297L300 164.500L303 163.500H322L327 165L331 163.500H425L436 226L442 184L447 163.500H476L478 164.500H488L490 163.500H534"
        stroke="#000"
        strokeWidth="3"
      />
      <path d="M83 0v228" stroke="#a52828" strokeWidth="2" />
    </g>
  </svg>
);

/* ---------- windows ---------- */

const PerformanceWindow = () => (
  <Window place="left-[22px] top-2.5 h-[452px] w-[639px]">
    <header className="flex h-[18px] shrink-0 items-center gap-0.5 bg-[#868286] pr-0.5 pl-0.5">
      <AppIcon />
      <h2 className="flex-1 font-bold text-[#d6d3ce]">Производительность</h2>
      <CaptionButtons />
    </header>
    <div className={`mt-0.5 flex h-6 shrink-0 items-stretch ${SUNKEN}`}>
      <nav className="flex flex-1 items-center pl-px">
        <AppIcon />
        {["Консоль", "Действие", "Вид", "Избранное", "Окно", "Справка"].map((t) => (
          <MenuItem key={t} text={t} />
        ))}
      </nav>
      <div className="flex items-center border-l border-l-[#848284] pr-[3px] pl-0.5">
        <CaptionButtons restore />
      </div>
    </div>
    <div className="flex h-6 shrink-0 items-center border-b border-b-[#848284] pl-px">
      <ToolButton label="Назад"><BackIcon /></ToolButton>
      <ToolButton label="Вперед"><ForwardIcon /></ToolButton>
      <ToolSeparator />
      <ToolButton label="Вверх"><UpIcon /></ToolButton>
      <ToolButton label="Дерево консоли" on><PanelIcon /></ToolButton>
      <ToolSeparator />
      <ToolButton label="Справка"><HelpIcon /></ToolButton>
      <ToolButton label="Панель действий"><PanelIcon flip /></ToolButton>
    </div>
    <div className="flex min-h-0 flex-1 gap-[3px] py-[3px]">
      <div className={`flex w-[194px] shrink-0 flex-col bg-white ${PANE}`}>
        <Tree nodes={PERF_TREE} />
        <ScrollBar thumb="w-[107px]" />
      </div>
      <div className={`flex min-w-0 flex-1 flex-col ${PANE}`}>
        <ChartToolbar />
        <div className="flex flex-col gap-2.5 px-2.5 pt-3">
          <div className="flex gap-[11px]">
            <AxisLabels values={[4800, 3840, 2880, 1920, 960, 0]} width="w-[33px]" />
            <PerfChart />
          </div>
          <div className="flex flex-col gap-1">
            <div className="flex justify-end gap-2">
              <Readout label="Последний" value="0,000" />
              <Readout label="Средний" value="221,124" />
            </div>
            <div className="flex justify-end gap-2">
              <Readout label="Минимум" value="0,000" />
              <Readout label="Максимум" value="3274,132" />
            </div>
            <div className="flex justify-end">
              <Readout label="Длительность" value="1:40" />
            </div>
          </div>
          <CounterTable
            columns={[
              { title: "Цвет", width: "w-[45px]" },
              { title: "Шк...", width: "w-[45px]" },
              { title: "Счетчик", width: "w-[179px]" },
              { title: "Экземп...", width: "w-[61px]" },
              { title: "Роди...", width: "w-[52px]" },
              { title: "Объе", width: "w-auto" },
            ]}
            rows={[
              { color: "#0000b5", cells: ["1,000", "Обмен страниц в сек", "---", "---", "Памя"], selected: true },
              { color: "#107d10", cells: ["100,...", "Средняя длина очереди диска", "_Total", "---", "Физи"] },
              { color: "#b52021", cells: ["1,000", "% загруженности процессора", "_Total", "---", "Проц"] },
            ]}
          />
        </div>
      </div>
    </div>
    <footer className="flex h-[18px] shrink-0 gap-0.5">
      <div className={`flex-1 ${SUNKEN}`} />
      <div className={`w-[131px] ${SUNKEN}`} />
      <div className={`w-[84px] ${SUNKEN}`} />
    </footer>
  </Window>
);

const ResourceWindow = () => (
  <Window place="left-[15px] top-[428px] h-[548px] w-[872px]">
    <header className="flex h-[18px] shrink-0 items-center justify-end bg-[#868286] pr-0.5">
      <CaptionButtons />
    </header>
    <div className="mt-0.5 flex h-6 shrink-0 items-center border-t border-t-white border-b border-b-[#848284] pl-0.5">
      {["Консоль", "Действие", "Вид", "Справка"].map((t) => (
        <MenuItem key={t} text={t} />
      ))}
    </div>
    <div className="flex h-6 shrink-0 items-center border-t border-t-white border-b border-b-[#848284] pl-px">
      <ToolButton label="Назад"><BackIcon on /></ToolButton>
      <ToolButton label="Вперед"><ForwardIcon /></ToolButton>
      <ToolSeparator />
      <ToolButton label="Вверх"><UpIcon /></ToolButton>
      <ToolSeparator />
      <ToolButton label="Справка"><HelpIcon /></ToolButton>
    </div>
    <div className="flex min-h-0 flex-1 gap-0.5 py-[3px]">
      <div className={`flex w-[253px] shrink-0 flex-col bg-white ${PANE}`}>
        <Tree nodes={WSRM_TREE} />
        <ScrollBar thumb="w-[213px]" />
      </div>
      <div className={`flex min-w-0 flex-1 flex-col ${PANE}`}>
        <ChartToolbar highlight />
        <div className="flex flex-col gap-2.5 pt-[11px] pr-[11px] pl-2">
          <div>
            <h3 className="pl-16 text-center leading-4">Диаграмма использования ресурсов</h3>
            <div className="flex">
              <div className="flex w-4 items-center justify-center">
                <span className="rotate-180 leading-4 whitespace-nowrap [writing-mode:vertical-rl]">Использование ресурсов</span>
              </div>
              <AxisLabels values={[350, 315, 280, 245, 210, 175, 140, 105, 70, 35, 0]} width="mr-2.5 w-7" />
              <UsageChart />
            </div>
          </div>
          <div className="flex flex-col gap-1">
            <div className="flex justify-end gap-1.5">
              <Readout label="Последний" value="97,872" />
              <Readout label="Средний" value="93,333" />
              <Readout label="Минимум" value="0,000" />
            </div>
            <div className="flex justify-end gap-2">
              <Readout label="Максимум" value="100,000" />
              <Readout label="Длительность" value="1:40" />
            </div>
          </div>
          <CounterTable
            columns={[
              { title: "Цвет", width: "w-[46px]" },
              { title: "Ш...", width: "w-[34px]" },
              { title: "Счетчик", width: "w-[174px]" },
              { title: "Экземпляр", width: "w-[122px]" },
              { title: "", width: "w-2" },
              { title: "Объект", width: "w-auto" },
            ]}
            rows={[
              { color: "#b52821", cells: ["1,000", "% системного управляемого ЦП", "Excel_equal_per_user", "", "ДСР: политика"] },
              { color: "#107d10", cells: ["1,000", "% управляемого ЦП", "Excel_equal_per_user", "", "ДСР: условие соответствия процессов"] },
              { color: "#00006b", cells: ["1,000", "Счетчик процессов", "Excel_equal_per_user", "", "ДСР: условие соответствия процессов"] },
              { color: "#f7ef21", cells: ["1,000", "% управляемого ЦП", "Default", "", "ДСР: условие соответствия процессов"], selected: true },
              { color: "#c630c6", cells: ["1,000", "Счетчик процессов", "Default", "", "ДСР: условие соответствия процессов"] },
            ]}
          />
        </div>
      </div>
    </div>
    <footer className="flex h-[18px] shrink-0 gap-0.5">
      <div className={`flex-1 leading-[17px] ${SUNKEN}`}>Управление ВЫПОЛНЯЕТСЯ</div>
      <div className={`w-[131px] ${SUNKEN}`} />
      <div className={`w-[84px] ${SUNKEN}`} />
    </footer>
  </Window>
);

const SESSIONS: [number, string][] = [
  [1, "Z"], [2, "OLPC1"], [3, "PC41"], [4, "PC17"], [5, "OLPC29"], [6, "OLPC7"], [7, ""], [8, ""],
  [9, "OLPC30"], [10, "UIS11-2"], [11, "OLPC3"], [12, "OLPC8"], [13, "UIS11-3"], [14, "PC40"],
  [15, "PC18"], [16, "OLPC26"], [17, "OLPC17"], [18, "PC25"], [19, "OLDPC34"], [20, "PC19"],
  [21, "UIS11-1"], [22, "PC2"], [23, "OLPC25"], [24, "OLPC2"], [25, "PC6"], [26, "OLPC13"],
  [27, "OLPC27"], [28, "OLPC4"], [29, "PC18"], [30, "PC49"], [31, "PC5"], [33, "4-ПК"],
  [34, "PC3"], [35, "PC13"], [36, "PC1"], [37, "PC14"], [32, "PC2"], [39, "PC24"], [40, "PC7"],
  [41, "PC3"], [38, "PC4"], [43, "OLPC9"], [42, "UIS11-4"], [44, "USER-OLDI"], [45, "PC22"], [46, "OLPC21"],
];
const USER_MARKS: Record<number, string> = { 6: "'", 16: ":", 20: "'", 25: "." };

const HEAD = "h-[17px] leading-4 font-normal whitespace-nowrap";

const TaskManagerWindow = () => (
  <Window place="left-[905px] -top-1 h-[998px] w-[410px]">
    <header className="flex h-[18px] shrink-0 items-center gap-1 bg-[#0a246a] pr-0.5 pl-px">
      <TaskMgrIcon />
      <h2 className="flex-1 font-bold text-white">Диспетчер задач Windows</h2>
      <CaptionButtons />
    </header>
    <div className="flex h-[21px] shrink-0 items-center border-b border-b-[#848284] pl-px">
      {["Файл", "Параметры", "Вид", "Справка"].map((t) => (
        <button key={t} className="px-[5px] leading-4">
          <span className="underline underline-offset-2">{t[0]}</span>
          {t.slice(1)}
        </button>
      ))}
    </div>
    <div className="flex min-h-0 flex-1 flex-col px-[5px] pt-1 pb-2">
      <div role="tablist" className="flex h-5 shrink-0 items-end pl-0.5">
        {[
          ["Приложения", "w-[75px]"],
          ["Процессы", "w-[61px]"],
          ["Быстродействие", "w-[97px]"],
          ["Сеть", "w-[40px]"],
        ].map(([t, w]) => (
          <button
            key={t}
            role="tab"
            aria-selected="false"
            className={`h-[18px] rounded-t-xs border border-b-0 border-t-white border-l-white border-r-[#424142] leading-[17px] whitespace-nowrap shadow-[inset_-1px_0_0_#848284] ${w}`}
          >
            {t}
          </button>
        ))}
        <button
          role="tab"
          aria-selected="true"
          className="-mb-px h-[21px] w-[88px] rounded-t-xs border border-b-0 border-t-white border-l-white border-r-[#424142] bg-[#d6d3ce] pb-[3px] leading-4 shadow-[inset_-1px_0_0_#848284]"
        >
          Пользователи
        </button>
      </div>
      <div className="flex min-h-0 flex-1 flex-col border border-t-white border-l-white border-r-[#424142] border-b-[#424142] pt-[17px] pr-[15px] pb-3.5 pl-[18px] shadow-[inset_0_-1px_0_#848284]">
        <div className={`flex min-h-0 flex-1 flex-col bg-white ${PANE}`}>
          <div className="min-h-0 flex-1 overflow-hidden">
            <table className="w-full table-fixed border-collapse">
              <thead>
                <tr>
                  <th className="w-[119px] p-0">
                    <div className={`pl-1 text-left ${HEAD} ${RAISED}`}>Пользователь</div>
                  </th>
                  <th className="w-[36px] p-0">
                    <div className={`pr-1 text-right ${HEAD} ${RAISED}`}>Код</div>
                  </th>
                  <th className="w-[92px] p-0">
                    <div className={`pl-1 text-left ${HEAD} ${RAISED}`}>Состояние</div>
                  </th>
                  <th className="p-0">
                    <div className={`pl-1.5 text-left ${HEAD} ${RAISED}`}>Имя клиента</div>
                  </th>
                </tr>
              </thead>
              <tbody>
                {SESSIONS.map(([code, client]) => (
                  <tr key={code} className="h-[17px]">
                    <td className="p-0 pl-1.5">
                      <div className="flex items-center gap-[3px]">
                        <UserIcon tone={code === 1 ? "own" : code === 21 ? "selected" : "plain"} />
                        {code === 21 && <span className="h-[15px] w-0.5 bg-[#0a246a]" />}
                        <span className="leading-none">{USER_MARKS[code]}</span>
                      </div>
                    </td>
                    <td className="p-0 pr-1.5 text-right leading-4">{code}</td>
                    <td className="p-0 pl-[5px] leading-4">{code === 8 ? "Отключен" : "Активен"}</td>
                    <td className="p-0 pl-1.5 leading-4">
                      <div className="flex">
                        <span className="w-[78px]">{client}</span>
                        {(code === 1 || code === 7) && <span>›</span>}
                      </div>
                    </td>
                  </tr>
                ))}
              </tbody>
            </table>
          </div>
          <ScrollBar thumb="w-[248px]" />
        </div>
        <div className="flex h-[31px] shrink-0 gap-1.5 pt-[7px] pl-[21px]">
          <button className={`w-[84px] shrink-0 ${RAISED}`}>
            Отклю<span className="underline underline-offset-2">ч</span>ить
          </button>
          <button className={`w-[109px] shrink-0 whitespace-nowrap ${RAISED}`}>
            В<span className="underline underline-offset-2">ы</span>йти из системы
          </button>
          <button className={`w-[134px] shrink-0 whitespace-nowrap ${RAISED}`}>
            <span className="underline underline-offset-2">О</span>тправить сообщение...
          </button>
        </div>
      </div>
    </div>
    <footer className="flex h-[18px] shrink-0 gap-0.5 leading-[17px] whitespace-nowrap">
      <div className={`w-24 shrink-0 ${SUNKEN}`}>Процессов: 557</div>
      <div className={`w-[118px] shrink-0 ${SUNKEN}`}>Загрузка ЦП: 38%</div>
      <div className={`flex-1 overflow-hidden ${SUNKEN}`}>Выделение памяти: 6731МБ / 1</div>
    </footer>
  </Window>
);

const EdgeWindow = () => (
  <Window place="left-[1268px] top-[195px] h-[192px] w-20">
    <header className="h-[18px] shrink-0 bg-[#868286] pl-0.5 leading-[18px] font-bold text-[#d6d3ce]">1</header>
    <div className="h-14 shrink-0 border-b border-b-[#848284] bg-white" />
  </Window>
);

/* ---------- desktop ---------- */

const DESKTOP_LABELS = [
  { text: "Ado", place: "top-[114px] left-0.5" },
  { text: "M", place: "top-[190px] left-3.5" },
  { text: "Of", place: "top-[204px] left-2" },
  { text: "M", place: "top-[266px] left-3.5" },
  { text: "Off", place: "top-[280px] left-1" },
  { text: "M", place: "top-[342px] left-3.5" },
  { text: "Of", place: "top-[356px] left-2" },
  { text: "Moz", place: "top-[418px] left-0.5" },
  { text: "Ка", place: "top-[494px] left-[3px]" },
  { text: "Об", place: "top-[570px] left-0.5" },
  { text: "Р", place: "top-[659px] left-[11px]" },
  { text: "'A", place: "top-[735px] left-1.5" },
  { text: "C", place: "top-[798px] left-2" },
];

const TASKS = [
  { icon: <AppIcon />, text: "Производительность" },
  { icon: <WsrmIcon />, text: "Диспетчер системных ..." },
  { icon: <TaskMgrIcon />, text: "Диспетчер задач Wind..." },
  { icon: <PaintIcon />, text: "Безымянный24.bmp - P..." },
];

const Grip = () => <div className="h-[22px] w-0.5 border-l border-l-[#848284] border-r border-r-white" />;

export default function App() {
  return (
    <main className="flex h-screen flex-col overflow-hidden bg-[#008200] font-['DejaVu_Sans_Condensed','DejaVu_Sans',sans-serif] text-[11px] leading-[14px] text-black">
      <div className="relative min-h-0 flex-1 overflow-hidden">
        {DESKTOP_LABELS.map((l, i) => (
          <span key={i} className={`absolute text-white ${l.place}`}>
            {l.text}
          </span>
        ))}
        <svg className="absolute top-1 left-[22px] h-2 w-8" viewBox="0 0 32 8" aria-hidden="true">
          <path d="M0 4Q10 1 18 2Q26 -1 30 1Q30 5 22 5L0 8z" fill="#f7f700" />
        </svg>
        <ResourceWindow />
        <PerformanceWindow />
        <TaskManagerWindow />
        <EdgeWindow />
      </div>
      <footer className="flex h-[30px] shrink-0 items-center border-t border-t-white bg-[#d6d3ce] pr-0.5 pl-0.5">
        <button className={`flex h-[23px] w-[51px] shrink-0 items-center gap-px pl-0.5 font-bold ${RAISED}`}>
          <StartFlag />
          Пуск
        </button>
        <div className="flex shrink-0 items-center gap-2 pr-1 pl-2">
          <Grip />
          <button aria-label="Internet Explorer">
            <IeIcon />
          </button>
          <Grip />
        </div>
        <div className="flex min-w-0 flex-1 gap-[3px] overflow-hidden">
          {TASKS.map((t) => (
            <button key={t.text} className={`flex h-[23px] w-40 shrink-0 items-center gap-[3px] pl-[3px] whitespace-nowrap ${RAISED}`}>
              {t.icon}
              {t.text}
            </button>
          ))}
          <button className={`flex h-[23px] w-40 shrink-0 items-center gap-[3px] pl-1 font-bold whitespace-nowrap ${PRESSED}`}>
            <XpFolderIcon />
            C:\WINDOWS\system...
          </button>
        </div>
        <div className="flex shrink-0 items-center gap-1">
          <Grip />
          <span className="ml-1.5 h-4 w-3 overflow-hidden bg-[#0a246a] leading-4 text-white">EN</span>
          <div className={`flex h-[23px] items-center gap-0.5 px-0.5 ${SUNKEN}`}>
            <CpuTray />
            <ShieldTray warn />
            <NetTray />
            <ShieldTray />
            <ServerTray />
          </div>
        </div>
      </footer>
    </main>
  );
}
